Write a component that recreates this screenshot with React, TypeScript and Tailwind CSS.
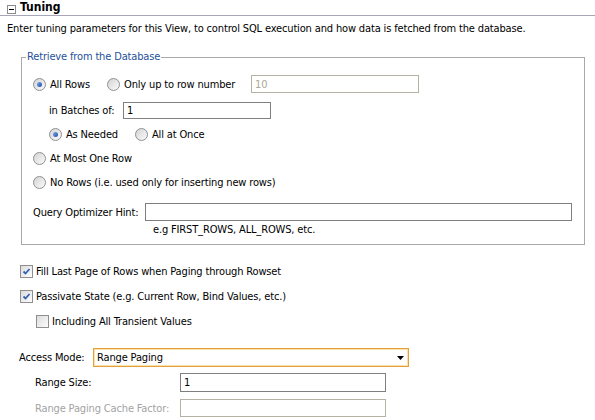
import React from "react";

function Radio({ checked = false }: { checked?: boolean }) {
  return (
    <span className="flex h-[13px] w-[13px] shrink-0 items-center justify-center rounded-full border border-[#8e8f8f] bg-linear-to-br from-[#d4d4d4] to-[#fbfbfb]">
      {checked && (
        <span className="h-[5px] w-[5px] rounded-full bg-linear-to-br from-[#7fa6e8] to-[#1c4fae]" />
      )}
    </span>
  );
}

function Check({ checked = false }: { checked?: boolean }) {
  return (
    <span className="flex h-[13px] w-[13px] shrink-0 items-center justify-center border border-[#8f8f8f] bg-linear-to-br from-[#dcdcdc] to-[#fdfdfd]">
      {checked && (
        <svg width="9" height="9" viewBox="0 0 9 9">
          <path d="M1.5 4.5 L3.5 6.5 L7.5 2" fill="none" stroke="#3561b5" strokeWidth="1.8" />
        </svg>
      )}
    </span>
  );
}

function Field({
  width,
  height = "h-[18px]",
  value = "",
  disabled = false,
}: {
  width: string;
  height?: string;
  value?: string;
  disabled?: boolean;
}) {
  return (
    <div
      className={`${width} ${height} flex items-center border bg-white pl-[3px] ${
        disabled ? "border-[#b5b2a3] text-[#aca899]" : "border-[#7f7f7f] text-black"
      }`}
    >
      {value}
    </div>
  );
}

export default function App() {
  return (
    <div className="h-[420px] w-[595px] overflow-hidden bg-white font-['DejaVu_Sans_Condensed','DejaVu_Sans',sans-serif] text-[11px] leading-[13px] tracking-[-0.15px] text-black">
      {/* section header */}
      <div className="flex h-[16px] items-end border-b border-[#a6a6b8]">
        <span className="mb-[1px] ml-[7px] flex h-[9px] w-[9px] items-center justify-center border border-[#8c8c8c] bg-white">
          <span className="h-px w-[5px] bg-black" />
        </span>
        <span className="ml-[4px] text-[12px] font-bold leading-[15px] tracking-normal">Tuning</span>
      </div>

      <p className="ml-[7px] mt-[6px]">
        Enter tuning parameters for this View, to control SQL execution and how data is fetched from the database.
      </p>

      <fieldset className="ml-[21px] mt-[15px] box-border h-[195px] w-[564px] border border-[#a9a9a9]">
        <legend className="ml-[4px] px-[1px] leading-[14px] text-[#24519a]">Retrieve from the Database</legend>

        <div className="mt-[11px] flex h-[18px] items-center pl-[11px]">
          <div className="flex w-[74px] items-center">
            <Radio checked />
            <span className="ml-[4px]">All Rows</span>
          </div>
          <div className="flex w-[144px] items-center">
            <Radio />
            <span className="ml-[4px]">Only up to row number</span>
          </div>
          <Field width="w-[168px]" value="10" disabled />
        </div>

        <div className="mt-[8px] flex h-[18px] items-center pl-[27px]">
          <span className="w-[74px]">in Batches of:</span>
          <Field width="w-[148px]" height="h-[17px]" value="1" />
        </div>

        <div className="mt-[6px] flex h-[18px] items-center pl-[27px]">
          <div className="flex w-[86px] items-center">
            <Radio checked />
            <span className="ml-[4px]">As Needed</span>
          </div>
          <div className="flex items-center">
            <Radio />
            <span className="ml-[4px]">All at Once</span>
          </div>
        </div>

        <div className="mt-[6px] flex h-[18px] items-center pl-[11px]">
          <Radio />
          <span className="ml-[4px]">At Most One Row</span>
        </div>

        <div className="mt-[6px] flex h-[18px] items-center pl-[11px]">
          <Radio />
          <span className="ml-[4px]">No Rows (i.e. used only for inserting new rows)</span>
        </div>

        <div className="mt-[12px] flex h-[18px] items-center pl-[11px]">
          <span className="w-[112px]">Query Optimizer Hint:</span>
          <Field width="w-[427px]" />
        </div>

        <div className="mt-[2px] pl-[131px]">e.g FIRST_ROWS, ALL_ROWS, etc.</div>
      </fieldset>

      <div className="mt-[17px] flex h-[18px] items-center pl-[20px]">
        <Check checked />
        <span className="ml-[3px]">Fill Last Page of Rows when Paging through Rowset</span>
      </div>
      <div className="mt-[7px] flex h-[18px] items-center pl-[20px]">
        <Check checked />
        <span className="ml-[3px]">Passivate State (e.g. Current Row, Bind Values, etc.)</span>
      </div>
      <div className="mt-[7px] flex h-[18px] items-center pl-[36px]">
        <Check />
        <span className="ml-[3px]">Including All Transient Values</span>
      </div>

      <div className="mt-[18px] flex h-[19px] items-center pl-[19px]">
        <span className="w-[74px]">Access Mode:</span>
        <div className="flex h-[19px] w-[316px] items-center justify-between border border-[#e3a13c] bg-white pl-[3px] pr-[4px] shadow-[inset_0_0_0_1px_#fbe1a8]">
          <span>Range Paging</span>
          <svg width="7" height="4" viewBox="0 0 7 4">
            <path d="M0 0 H7 L3.5 4 Z" fill="#000" />
          </svg>
        </div>
      </div>

      <div className="mt-[6px] flex h-[19px] items-center pl-[35px]">
        <span className="w-[145px]">Range Size:</span>
        <Field width="w-[206px]" height="h-[19px]" value="1" />
      </div>

      <div className="mt-[7px] flex h-[18px] items-center pl-[35px]">
        <span className="w-[145px] text-[#a3a3a3]">Range Paging Cache Factor:</span>
        <Field width="w-[206px]" disabled />
      </div>
    </div>
  );
}
